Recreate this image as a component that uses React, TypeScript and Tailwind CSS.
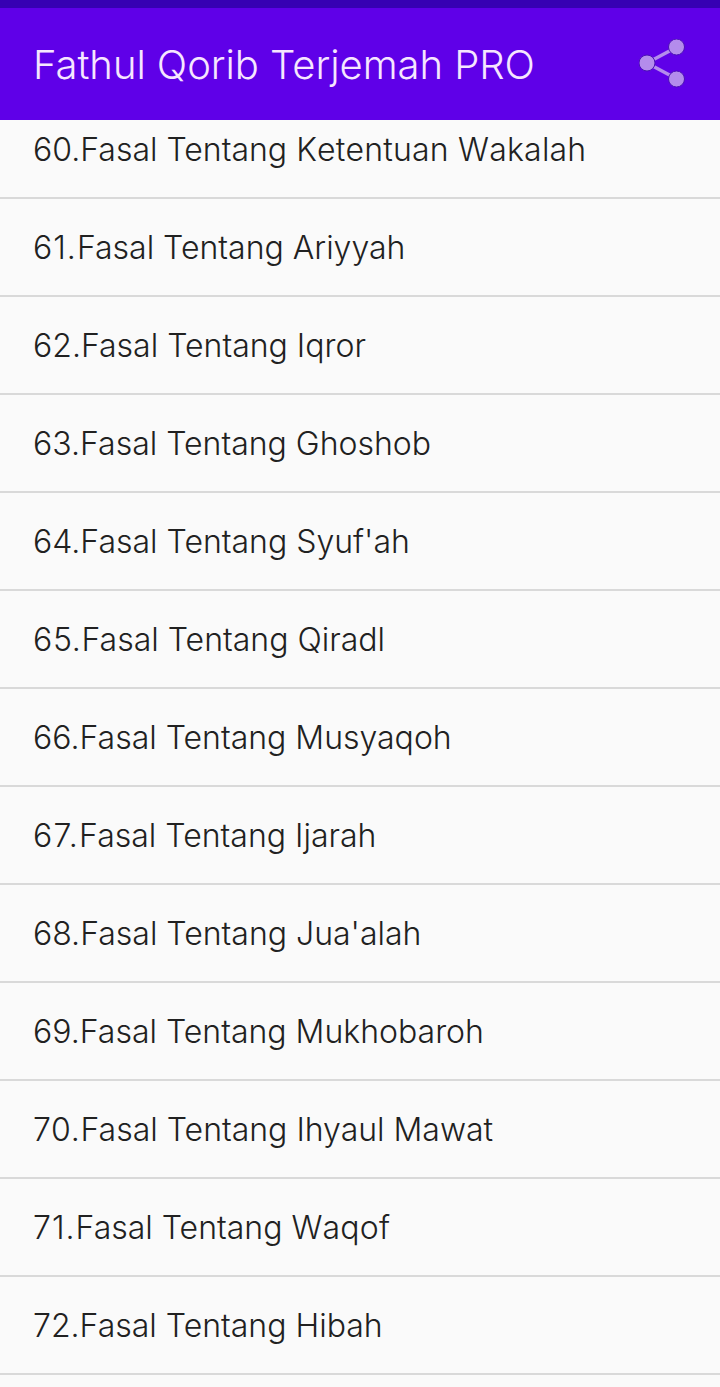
const chapters = [
  { no: '60.', title: 'Fasal Tentang ', tail: 'Ketentuan Wakalah', noClass: '' },
  { no: '61.', title: 'Fasal Tentang Ariyyah', tail: '', noClass: 'tracking-[1px]' },
  { no: '62.', title: 'Fasal Tentang Iqror', tail: '', noClass: '' },
  { no: '63.', title: 'Fasal Tentang Ghoshob', tail: '', noClass: '' },
  { no: '64.', title: "Fasal Tentang Syuf'ah", tail: '', noClass: '' },
  { no: '65.', title: 'Fasal Tentang Qiradl', tail: '', noClass: 'tracking-[0.7px]' },
  { no: '66.', title: 'Fasal Tentang Musyaqoh', tail: '', noClass: '' },
  { no: '67.', title: 'Fasal Tentang Ijarah', tail: '', noClass: 'tracking-[1.3px]' },
  { no: '68.', title: "Fasal Tentang Jua'alah", tail: '', noClass: '' },
  { no: '69.', title: 'Fasal Tentang Mukhobaroh', tail: '', noClass: '' },
  { no: '70.', title: 'Fasal Tentang Ihyaul Mawat', tail: '', noClass: 'tracking-[0.7px]' },
  { no: '71.', title: 'Fasal Tentang ', tail: 'Waqof', noClass: 'tracking-[1px]' },
  { no: '72.', title: 'Fasal Tentang Hibah', tail: '', noClass: '' },
];

export default function App() {
  return (
    <div className="flex h-[1387px] w-[720px] flex-col overflow-hidden bg-[#fafafa] font-['Inter',sans-serif]">
      {/* Status bar */}
      <div className="h-2 shrink-0 bg-[#3700b3]" />

      {/* Toolbar */}
      <header className="relative z-10 flex h-[112px] shrink-0 items-center justify-between bg-[#5f00e8] pl-[33px] pr-[33px]">
        <h1 className="pt-0.5 text-[40px] font-light leading-none tracking-[-0.05px] text-[#f6e6ff]">
          Fathul Qorib Terjemah PRO
        </h1>
        <svg width="48" height="50" viewBox="0 0 48 50" fill="#b48cec" stroke="#4a10b4">
          <line x1="8" y1="24" x2="38" y2="8" stroke="#b48cec" strokeWidth="3.5" />
          <line x1="8" y1="24" x2="38" y2="40" stroke="#b48cec" strokeWidth="3.5" />
          <circle cx="37.5" cy="8" r="8" strokeWidth="1" />
          <circle cx="8" cy="24" r="8" strokeWidth="1" />
          <circle cx="37.5" cy="40" r="8" strokeWidth="1" />
        </svg>
      </header>

      {/* Chapter list, scrolled a little */}
      <div className="min-h-0 flex-1 overflow-hidden">
        <ul className="-mt-[19px]">
          {chapters.map((item) => (
            <li
              key={item.no}
              className="flex h-[98px] items-center whitespace-pre border-b-2 border-[#d9d9d9] pl-[33px] pt-0.5 text-[32px] font-light leading-none text-[#212121]"
            >
              <span className={item.noClass}>{item.no}</span>
              <span>{item.title}</span>
              {item.tail && <span className="tracking-[0.2px] [font-kerning:none]">{item.tail}</span>}
            </li>
          ))}
        </ul>
      </div>
    </div>
  );
}
